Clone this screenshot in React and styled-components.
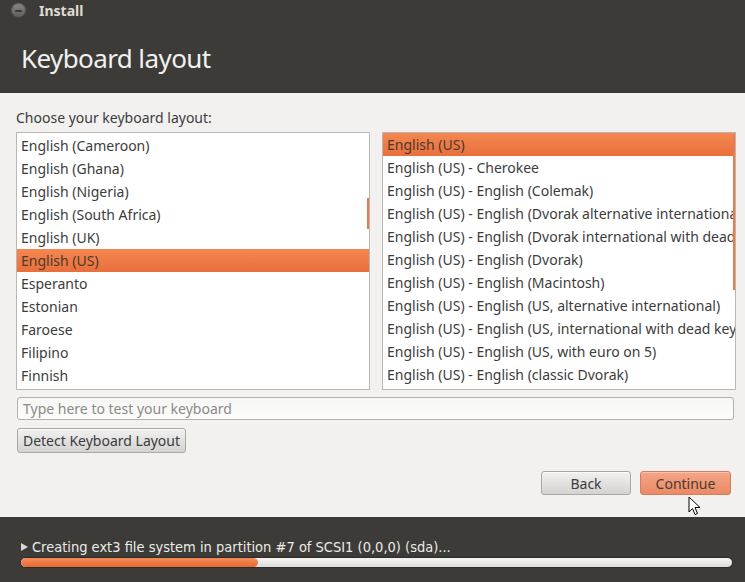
import React from "react";
import styled, { createGlobalStyle, css } from "styled-components";

const Global = createGlobalStyle`
  html, body { margin: 0; padding: 0; background: #f2f1f0; }
  body { font-family: "Noto Sans", "Open Sans", sans-serif; }
  * { box-sizing: border-box; }
`;

const Window = styled.div`
  position: relative;
  width: 745px;
  height: 582px;
  display: flex;
  flex-direction: column;
  background: #f2f1f0;
  overflow: hidden;
`;

const Header = styled.header`
  height: 93px;
  background: #3c3b37;
  padding: 3px 0 0 11px;
  display: flex;
  flex-direction: column;
`;

const TitleBar = styled.div`
  display: flex;
  align-items: center;
  gap: 13px;
  height: 15px;
`;

const CloseBtn = styled.div`
  width: 15px;
  height: 15px;
  border-radius: 50%;
  background: linear-gradient(#8a8984, #5c5b57);
  box-shadow: inset 0 0 0 1px rgba(0, 0, 0, 0.25);
  display: flex;
  align-items: center;
  justify-content: center;
  &::before {
    content: "";
    width: 7px;
    height: 2px;
    border-radius: 1px;
    background: #3a3935;
  }
`;

const WindowTitle = styled.span`
  color: #dfdbd2;
  font-weight: bold;
  font-size: 14px;
  line-height: 15px;
`;

const Heading = styled.h1`
  margin: 23px 0 0 10px;
  font-weight: 400;
  font-size: 26px;
  letter-spacing: -0.6px;
  line-height: 34px;
  color: #f2f1f0;
`;

const Body = styled.main`
  flex: 1;
  display: flex;
  flex-direction: column;
  padding: 0 10px 0 16px;
`;

const Prompt = styled.div`
  margin-top: 15px;
  font-size: 14px;
  line-height: 20px;
  color: #3c3c3c;
`;

const Lists = styled.div`
  margin-top: 4px;
  display: grid;
  grid-template-columns: 354px 354px;
  column-gap: 12px;
  height: 258px;
`;

const ListBox = styled.div`
  position: relative;
  background: #fff;
  border: 1px solid #bab8b4;
  overflow: hidden;
`;

const ListInner = styled.div`
  margin-top: ${(p) => p.$offset}px;
`;

const Row = styled.div`
  height: 23px;
  line-height: 23px;
  padding-left: 4px;
  font-size: 14px;
  color: #3c3c3c;
  white-space: nowrap;
  overflow: hidden;
  ${(p) =>
    p.$selected &&
    css`
      background: linear-gradient(#f4874f, #e96f3c);
      color: #4a3a30;
    `}
`;

const Thumb = styled.div`
  position: absolute;
  right: -1px;
  width: 3px;
  background: #f07746;
`;

const TestInput = styled.input`
  margin: 7px 0 0 1px;
  width: 717px;
  height: 23px;
  border: 1px solid #b3b1ad;
  border-radius: 3px;
  background: linear-gradient(#f6f6f5, #fdfdfd);
  padding: 0 5px;
  font-family: inherit;
  font-size: 14px;
  color: #3c3c3c;
  outline: none;
  &::placeholder {
    color: #8b8a87;
  }
`;

const Button = styled.button`
  height: ${(p) => p.$h || 24}px;
  width: ${(p) => p.$w}px;
  padding: 0;
  border-radius: 3px;
  font-family: inherit;
  font-size: 14px;
  color: #3c3c3c;
  border: 1px solid #a9a7a3;
  background: linear-gradient(#f1f1f0, #d4d3d1);
  box-shadow: inset 0 1px 0 rgba(255, 255, 255, 0.7);
  ${(p) =>
    p.$primary &&
    css`
      border-color: #d27d5b;
      background: linear-gradient(#f4a587, #ea8a65);
      color: #4a3a30;
      box-shadow: inset 0 1px 0 rgba(255, 255, 255, 0.35);
    `}
`;

const DetectRow = styled.div`
  margin: 8px 0 0 1px;
  display: flex;
`;

const Actions = styled.div`
  margin: 18px 4px 0 0;
  display: flex;
  justify-content: flex-end;
  gap: 9px;
`;

const Footer = styled.footer`
  height: 65px;
  background: #3c3b37;
  padding: 22px 12px 0 20px;
  display: flex;
  flex-direction: column;
  gap: 2px;
`;

const Status = styled.div`
  display: flex;
  align-items: center;
  gap: 4px;
  color: #ecebe8;
  font-family: "Liberation Sans Narrow", "DejaVu Sans Condensed", "Roboto Condensed", "Noto Sans", sans-serif;
  font-stretch: condensed;
  font-size: 14.5px;
  line-height: 16px;
  padding-left: 1px;
`;

const Triangle = styled.span`
  width: 0;
  height: 0;
  border-left: 7px solid #d8d6d2;
  border-top: 4px solid transparent;
  border-bottom: 4px solid transparent;
`;

const Progress = styled.div`
  height: 11px;
  border-radius: 6px;
  border: 1px solid #2c2b28;
  background: linear-gradient(#f5f5f4, #dddcda);
  overflow: hidden;
`;

const ProgressFill = styled.div`
  height: 100%;
  border-radius: 6px;
  background: linear-gradient(#f68c57, #e46934);
`;

const Cursor = styled.svg`
  position: absolute;
  left: 688px;
  top: 496px;
`;

const left = [
  "English (Cameroon)",
  "English (Ghana)",
  "English (Nigeria)",
  "English (South Africa)",
  "English (UK)",
  "English (US)",
  "Esperanto",
  "Estonian",
  "Faroese",
  "Filipino",
  "Finnish",
];

const right = [
  "English (US)",
  "English (US) - Cherokee",
  "English (US) - English (Colemak)",
  "English (US) - English (Dvorak alternative international no dead keys)",
  "English (US) - English (Dvorak international with dead keys)",
  "English (US) - English (Dvorak)",
  "English (US) - English (Macintosh)",
  "English (US) - English (US, alternative international)",
  "English (US) - English (US, international with dead keys)",
  "English (US) - English (US, with euro on 5)",
  "English (US) - English (classic Dvorak)",
];

export default function App() {
  return (
    <>
      <Global />
      <Window>
        <Header>
          <TitleBar>
            <CloseBtn />
            <WindowTitle>Install</WindowTitle>
          </TitleBar>
          <Heading>Keyboard layout</Heading>
        </Header>
        <Body>
          <Prompt>Choose your keyboard layout:</Prompt>
          <Lists>
            <ListBox>
              <ListInner $offset={1}>
                {left.map((t) => (
                  <Row key={t} $selected={t === "English (US)"}>
                    {t}
                  </Row>
                ))}
              </ListInner>
              <Thumb style={{ top: 65, height: 31 }} />
            </ListBox>
            <ListBox>
              <ListInner $offset={0}>
                {right.map((t, i) => (
                  <Row key={t} $selected={i === 0}>
                    {t}
                  </Row>
                ))}
              </ListInner>
              <Thumb style={{ top: 1, height: 156 }} />
            </ListBox>
          </Lists>
          <TestInput placeholder="Type here to test your keyboard" />
          <DetectRow>
            <Button $w={169} $h={25}>Detect Keyboard Layout</Button>
          </DetectRow>
          <Actions>
            <Button $w={90}>Back</Button>
            <Button $w={91} $primary>Continue</Button>
          </Actions>
        </Body>
        <Footer>
          <Status>
            <Triangle />
            Creating ext3 file system in partition #7 of SCSI1 (0,0,0) (sda)...
          </Status>
          <Progress>
            <ProgressFill style={{ width: "33.3%" }} />
          </Progress>
        </Footer>
        <Cursor width="13" height="20" viewBox="0 0 13 20">
          <path
            d="M1 1 L1 16 L4.5 12.5 L7 18.5 L9.5 17.5 L7 11.5 L12 11.5 Z"
            fill="#fff"
            stroke="#000"
            strokeWidth="1"
            strokeLinejoin="round"
          />
        </Cursor>
      </Window>
    </>
  );
}
